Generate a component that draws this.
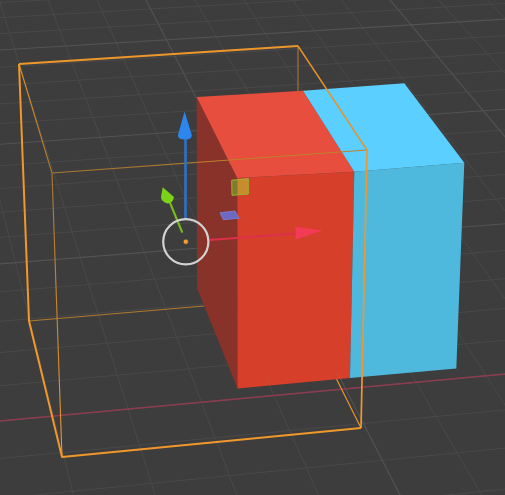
const quad = [
  [345.6, 388.8],
  [690.4, 356.7],
  [411, 24.9],
  [166.5, 39.85],
];

function makeProjection() {
  const [[x0, y0], [x1, y1], [x2, y2], [x3, y3]] = quad;
  const dx1 = x1 - x2, dx2 = x3 - x2, sx = x0 - x1 + x2 - x3;
  const dy1 = y1 - y2, dy2 = y3 - y2, sy = y0 - y1 + y2 - y3;
  const den = dx1 * dy2 - dx2 * dy1;
  const g = (sx * dy2 - dx2 * sy) / den;
  const h = (dx1 * sy - sx * dy1) / den;
  const a = x1 - x0 + g * x1, b = x3 - x0 + h * x3;
  const d = y1 - y0 + g * y1, e = y3 - y0 + h * y3;
  return (u: number, v: number) => {
    const w = g * u + h * (v / 3) + 1;
    return [(a * u + b * (v / 3) + x0) / w, (d * u + e * (v / 3) + y0) / w];
  };
}

const project = makeProjection();
const U0 = -4, U1 = 4, V0 = -3, V1 = 6;

type Seg = { k: string; x1: number; y1: number; x2: number; y2: number; major: boolean };
const segs: Seg[] = [];
for (let i = U0 * 5; i <= U1 * 5; i++) {
  const [ax, ay] = project(i / 5, V0);
  const [bx, by] = project(i / 5, V1);
  segs.push({ k: `u${i}`, x1: ax, y1: ay, x2: bx, y2: by, major: i % 5 === 0 });
}
for (let i = V0 * 5; i <= V1 * 5; i++) {
  const [ax, ay] = project(U0, i / 5);
  const [bx, by] = project(U1, i / 5);
  segs.push({ k: `v${i}`, x1: ax, y1: ay, x2: bx, y2: by, major: i % 5 === 0 });
}

function Grid({ faint }: { faint?: boolean }) {
  return (
    <g>
      {segs.filter((s) => !s.major).map((s) => (
        <line key={s.k} x1={s.x1} y1={s.y1} x2={s.x2} y2={s.y2} stroke={faint ? "#9a9a9a" : "#494949"} strokeWidth={1} />
      ))}
      {segs.filter((s) => s.major).map((s) => (
        <line key={s.k} x1={s.x1} y1={s.y1} x2={s.x2} y2={s.y2} stroke={faint ? "#9a9a9a" : "#535353"} strokeWidth={1.1} />
      ))}
    </g>
  );
}

export default function App() {
  return (
    <div className="w-[505px] h-[495px] overflow-hidden bg-[#3d3d3d]">
      <svg className="block" width="505" height="495" viewBox="0 0 505 495">
        <defs>
          <clipPath id="below">
            <polygon points="237,380.5 456.3,361 456.3,368.5 350,378 237.5,388.5" />
          </clipPath>
          <linearGradient id="vert" gradientUnits="userSpaceOnUse" x1="52" y1="173" x2="62" y2="457">
            <stop offset="0" stopColor="#a97732" />
            <stop offset="1" stopColor="#ee982c" />
          </linearGradient>
          <linearGradient id="slant" gradientUnits="userSpaceOnUse" x1="19" y1="64" x2="52" y2="173">
            <stop offset="0" stopColor="#e0922e" />
            <stop offset="1" stopColor="#a97732" />
          </linearGradient>
        </defs>

        <Grid />
        <line x1="0" y1="421" x2="505" y2="374" stroke="#8d3c50" strokeWidth="1.5" />

        {/* hidden edges behind the cube */}
        <line x1="298" y1="46" x2="298" y2="92" stroke="#b57c30" strokeWidth="1" />
        <line x1="29" y1="321" x2="204" y2="306" stroke="#b07a2e" strokeWidth="1.1" />
        <line x1="52" y1="173" x2="62" y2="457" stroke="url(#vert)" strokeWidth="1.1" />
        <line x1="19" y1="64" x2="52" y2="173" stroke="url(#slant)" strokeWidth="1.1" />
        <line x1="336.5" y1="379" x2="361" y2="428" stroke="#e0922c" strokeWidth="1.2" />

        {/* cube */}
        <polygon points="196.7,97 237.3,178 237.5,388.5 197,288" fill="#88322a" />
        <polygon points="237.3,178 354.3,171.7 350,378 237.5,388.5" fill="#d63f2a" />
        <polygon points="196.7,97 303,90.7 354.3,171.7 237.3,178" fill="#e84e3e" />
        <polygon points="354.3,171.7 464.3,162.7 456.3,368.5 350,378" fill="#4fb9dd" />
        <polygon points="303,90.7 404.3,83.3 464.3,162.7 354.3,171.7" fill="#5bcfff" />
        <g clipPath="url(#below)" opacity="0.14">
          <Grid faint />
        </g>

        {/* front box edges crossing the cube */}
        <line x1="52" y1="173" x2="196.7" y2="162.4" stroke="#a97732" strokeWidth="1.1" />
        <line x1="196.7" y1="162.4" x2="367" y2="150" stroke="#c0802c" strokeWidth="1" />

        {/* thick silhouette */}
        <polyline points="19,64 298,46" fill="none" stroke="#ee982c" strokeWidth="2" />
        <line x1="298" y1="46" x2="367" y2="150" stroke="#e8922c" strokeWidth="1.4" />
        <line x1="367" y1="150" x2="361" y2="428" stroke="#f0982c" strokeWidth="1.7" />
        <polyline points="361,428 62,457 29,321 19,64" fill="none" stroke="#f0982c" strokeWidth="2" strokeLinejoin="round" />

        {/* z arrow */}
        <line x1="185.5" y1="138" x2="185.5" y2="220" stroke="#2e72c6" strokeWidth="2.6" />
        <path d="M184.6 111.5 L178 135 Q177.6 139.5 185 139.5 Q192.2 139.5 191.8 135 Z" fill="#2d86ee" />

        {/* y arrow */}
        <line x1="169.3" y1="201" x2="182.3" y2="232.7" stroke="#74ba22" strokeWidth="2.2" />
        <path d="M162.7 187.3 L174 197 Q173 203 167.3 203.5 Q161 201 161 197 Z" fill="#7dd31a" />

        {/* x arrow */}
        <line x1="209.5" y1="240" x2="296" y2="233.5" stroke="#de2f4a" strokeWidth="2" />
        <path d="M322.7 230.6 L295 226.7 Q296.6 233 295.4 239.4 Z" fill="#f43b55" />

        {/* plane handles */}
        <polygon points="220,212.7 235,211 239,218.3 223.3,219.7" fill="#6b69c4" stroke="#7c80dc" strokeWidth="0.8" />
        <polygon points="231.7,180.3 237.3,179.8 237.3,195 232,195.3" fill="#7f7a2c" />
        <polygon points="237.3,179.8 248.3,178.6 248.3,194 237.3,195" fill="#c78c2c" />
        <polygon points="231.7,180.3 248.3,178.6 248.3,194 232,195.3" fill="none" stroke="#9db42e" strokeWidth="1" />

        {/* rotation ring and origin */}
        <circle cx="185.8" cy="241.7" r="22.6" fill="none" stroke="#d2d2d2" strokeWidth="2.2" />
        <circle cx="185.8" cy="241.7" r="2.6" fill="#f5a030" stroke="#2b2b2b" strokeWidth="0.6" />
      </svg>
    </div>
  );
}
